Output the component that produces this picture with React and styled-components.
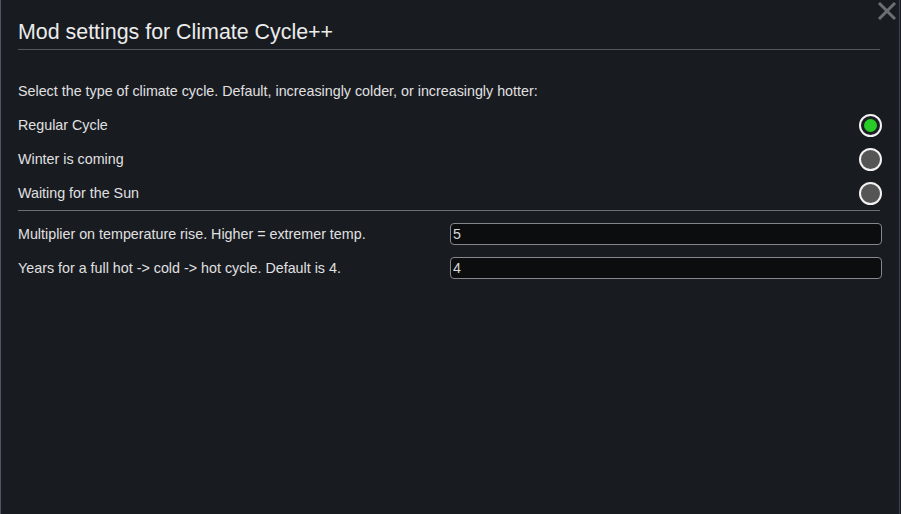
import React, { useState } from "react";
import styled, { createGlobalStyle } from "styled-components";

const GlobalStyle = createGlobalStyle`
  html, body {
    margin: 0;
    padding: 0;
    background: #181b20;
  }
  #root {
    height: 514px;
  }
`;

const options = ["Regular Cycle", "Winter is coming", "Waiting for the Sun"];

function App() {
  const [selected, setSelected] = useState(0);
  const [multiplier, setMultiplier] = useState("5");
  const [years, setYears] = useState("4");

  return (
    <>
      <GlobalStyle />
      <Dialog>
        <CloseButton aria-label="Close">
          <svg width="20" height="18" viewBox="0 0 20 18">
            <path d="M2 1 L18 17 M18 1 L2 17" stroke="#6b6e73" strokeWidth="3" />
          </svg>
        </CloseButton>
        <Content>
          <Title>Mod settings for Climate Cycle++</Title>
          <Description>
            Select the type of climate cycle. Default, increasingly colder, or
            increasingly hotter:
          </Description>
          <Options>
            {options.map((label, i) => (
              <OptionRow key={label} onClick={() => setSelected(i)}>
                <Label>{label}</Label>
                <Radio $checked={selected === i} />
              </OptionRow>
            ))}
          </Options>
          <Divider />
          <Fields>
            <FieldRow>
              <Label>Multiplier on temperature rise. Higher = extremer temp.</Label>
              <TextInput
                value={multiplier}
                onChange={(e) => setMultiplier(e.target.value)}
              />
            </FieldRow>
            <FieldRow>
              <Label>Years for a full hot -&gt; cold -&gt; hot cycle. Default is 4.</Label>
              <TextInput value={years} onChange={(e) => setYears(e.target.value)} />
            </FieldRow>
          </Fields>
        </Content>
      </Dialog>
    </>
  );
}

export default App;

const Dialog = styled.div`
  position: relative;
  box-sizing: border-box;
  width: 900px;
  height: 514px;
  background: #181b20;
  border-left: 1px solid #4c5566;
  border-right: 1px solid #3a4150;
  font-family: "Liberation Sans", Arial, sans-serif;
  color: #e6e6e6;
`;

const CloseButton = styled.div`
  position: absolute;
  top: 2px;
  right: 2px;
  width: 20px;
  height: 18px;
  cursor: pointer;
  svg {
    display: block;
  }
`;

const Content = styled.div`
  padding: 18px 18px 0 17px;
  display: flex;
  flex-direction: column;
`;

const Title = styled.h1`
  margin: 0;
  font-size: 21.4px;
  font-weight: normal;
  line-height: 28px;
  color: #ececec;
  padding-bottom: 3px;
  border-bottom: 1px solid #54575c;
  margin-right: 1px;
`;

const Description = styled.p`
  margin: 31px 0 0 0;
  font-size: 14.3px;
  line-height: 20px;
  color: #e0e0e0;
`;

const Label = styled.span`
  font-size: 14.3px;
  color: #e0e0e0;
`;

const Options = styled.div`
  margin-top: 7px;
  display: flex;
  flex-direction: column;
`;

const OptionRow = styled.div`
  display: flex;
  align-items: center;
  justify-content: space-between;
  height: 34px;
  cursor: pointer;
`;

const Radio = styled.span`
  box-sizing: border-box;
  width: 23px;
  height: 23px;
  border-radius: 50%;
  border: 2px solid #f2f2f2;
  background: ${(p) => (p.$checked ? "#1c1f23" : "#555555")};
  display: flex;
  align-items: center;
  justify-content: center;
  margin-right: -1px;
  &::after {
    content: "";
    width: 13px;
    height: 13px;
    border-radius: 50%;
    background: #27cc27;
    display: ${(p) => (p.$checked ? "block" : "none")};
  }
`;

const Divider = styled.div`
  height: 1px;
  background: #6c6f74;
  margin: 0 1px 0 0;
`;

const Fields = styled.div`
  margin-top: 6px;
  display: flex;
  flex-direction: column;
`;

const FieldRow = styled.div`
  display: grid;
  grid-template-columns: 432px 432px;
  align-items: center;
  height: 34px;
`;

const TextInput = styled.input`
  box-sizing: border-box;
  height: 22px;
  width: 432px;
  background: #0c0d0f;
  border: 1px solid #85878a;
  border-radius: 4px;
  color: #d8d8d8;
  font-family: "Liberation Sans", Arial, sans-serif;
  font-size: 14.3px;
  padding: 0 2px;
  outline: none;
`;
